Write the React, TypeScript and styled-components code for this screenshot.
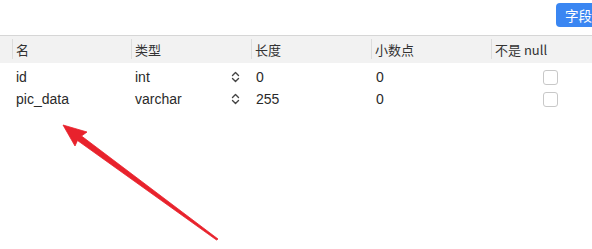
import React from "react";
import styled, { createGlobalStyle } from "styled-components";

const Global = createGlobalStyle`
  html, body { margin: 0; padding: 0; background: #fff; }
  body {
    font-family: "Liberation Sans", "Noto Sans CJK SC", sans-serif;
    color: #262626;
    -webkit-font-smoothing: antialiased;
  }
`;

const Page = styled.div`
  position: relative;
  width: 592px;
  height: 249px;
  overflow: hidden;
  background: #fff;
`;

const TopBar = styled.div`
  height: 35px;
  display: flex;
  justify-content: flex-end;
  align-items: flex-start;
  padding-top: 3px;
  box-sizing: border-box;
`;

const PrimaryButton = styled.button`
  height: 24px;
  width: 46px;
  margin-right: -10px;
  border: none;
  border-radius: 4px;
  background: #3a86f2;
  color: #fff;
  font-family: "Noto Sans CJK SC", sans-serif;
  font-size: 13.5px;
  padding: 0 0 0 9px;
  text-align: left;
`;

const Grid = styled.div`
  display: grid;
  grid-template-columns: 12px 119px 120px 120px 120px 1fr;
`;

const HeaderRow = styled(Grid)`
  height: 27px;
  border-top: 1px solid #d6d6d6;
  background: #f2f2f2;
`;

const HeadCell = styled.div<{ $sep?: boolean }>`
  display: flex;
  align-items: center;
  padding-left: 3px;
  margin: 3px 0 4px;
  border-left: ${(p) => (p.$sep ? "1px solid #dcdcdc" : "none")};
  font-family: "Noto Sans CJK SC", sans-serif;
  font-size: 13px;
  color: #333;
`;

const Body = styled.div`
  padding-top: 3px;
`;

const Row = styled(Grid)`
  height: 22px;
`;

const Cell = styled.div<{ $pad?: number }>`
  display: flex;
  align-items: center;
  padding-left: ${(p) => p.$pad ?? 3}px;
  font-size: 14px;
  color: #2a2a2a;
  white-space: nowrap;
`;

const TypeCell = styled(Cell)`
  justify-content: space-between;
  padding-right: 11px;
`;

const CheckCell = styled(Cell)`
  justify-content: flex-end;
  padding-right: 34px;
`;

const Check = styled.span`
  width: 13px;
  height: 13px;
  border: 1px solid #c8c8c8;
  border-radius: 3px;
  background: #fff;
`;

const Stepper = () => (
  <svg width="9" height="12" viewBox="0 0 9 12">
    <path d="M1.5 4.5 L4.5 1.5 L7.5 4.5 M1.5 7.5 L4.5 10.5 L7.5 7.5" fill="none" stroke="#444" strokeWidth="1.4" strokeLinecap="round" strokeLinejoin="round" />
  </svg>
);

const ArrowLayer = styled.svg`
  position: absolute;
  left: 0;
  top: 0;
  pointer-events: none;
`;

const rows = [
  { name: "id", type: "int", len: "0", dec: "0" },
  { name: "pic_data", type: "varchar", len: "255", dec: "0" },
];

export default function App() {
  return (
    <Page>
      <Global />
      <TopBar>
        <PrimaryButton>字段</PrimaryButton>
      </TopBar>
      <HeaderRow>
        <HeadCell />
        <HeadCell $sep>名</HeadCell>
        <HeadCell $sep>类型</HeadCell>
        <HeadCell $sep>长度</HeadCell>
        <HeadCell $sep>小数点</HeadCell>
        <HeadCell $sep>不是 null</HeadCell>
      </HeaderRow>
      <Body>
        {rows.map((r) => (
          <Row key={r.name}>
            <Cell />
            <Cell $pad={4}>{r.name}</Cell>
            <TypeCell $pad={4}>
              <span>{r.type}</span>
              <Stepper />
            </TypeCell>
            <Cell $pad={5}>{r.len}</Cell>
            <Cell $pad={5}>{r.dec}</Cell>
            <CheckCell>
              <Check />
            </CheckCell>
          </Row>
        ))}
      </Body>
      <ArrowLayer width="592" height="249" viewBox="0 0 592 249">
        <path
          d="M63 125 L87 132 L81.5 136 L218 239 L216.5 240 L77.5 140.5 L75 146 Z"
          fill="#e8222c"
          stroke="#e8222c"
          strokeWidth="0.8"
          strokeLinejoin="round"
        />
      </ArrowLayer>
    </Page>
  );
}
